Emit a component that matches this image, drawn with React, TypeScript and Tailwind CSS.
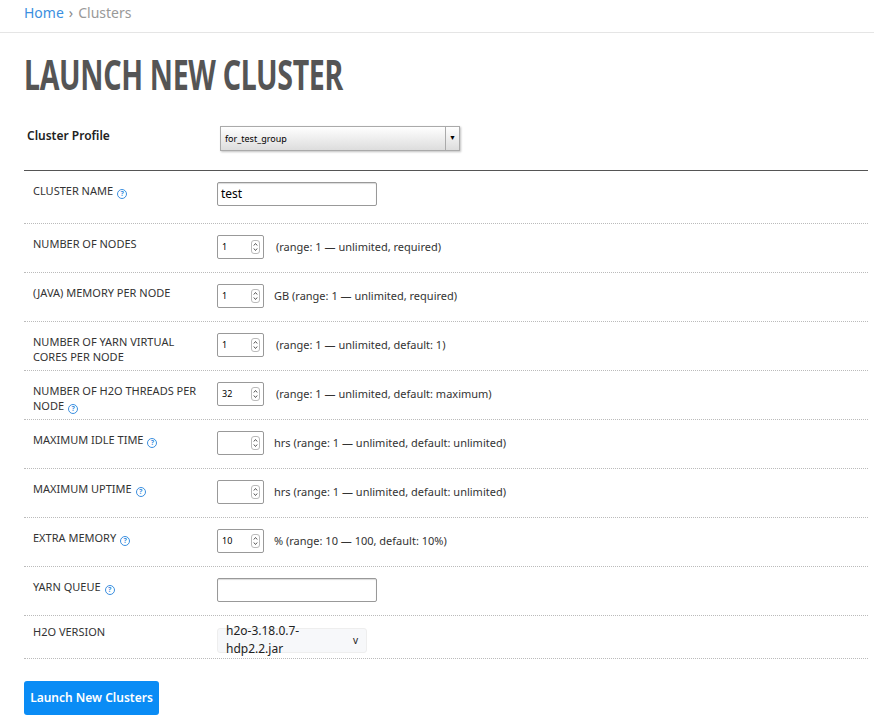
import React from 'react';

const Help = () => (
  <span className="ml-1 inline-flex h-[10px] w-[10px] items-center justify-center rounded-full border border-[#3b8fe0] align-[-1px] text-[7px] font-bold leading-none text-[#3b8fe0]">
    ?
  </span>
);

const NumInput = ({ value }: { value?: string }) => (
  <div className="flex h-[24px] w-[47px] items-center justify-between rounded-[2px] border border-[#999] bg-white pl-[4px] pr-[3px] text-[9px] text-black">
    <span>{value ?? ''}</span>
    <span className="flex h-[14px] w-[9px] items-center justify-center rounded-[3px] border border-[#bbb]">
      <svg width="5" height="10" viewBox="0 0 5 10" fill="none" stroke="#555" strokeWidth="1">
        <path d="M0.8 3.5 L2.5 1.5 L4.2 3.5" />
        <path d="M0.8 6.5 L2.5 8.5 L4.2 6.5" />
      </svg>
    </span>
  </div>
);

type Row = { label: React.ReactNode; field: React.ReactNode };

const rows: Row[] = [
  {
    label: <>CLUSTER NAME<Help /></>,
    field: (
      <div className="flex h-[24px] w-[160px] items-center rounded-[2px] border border-[#999] bg-white px-[3px] text-[12px] text-black shadow-[inset_0_1px_1px_rgba(0,0,0,0.15)]">
        test
      </div>
    ),
  },
  { label: 'NUMBER OF NODES', field: <><NumInput value="1" /><span className="ml-[12px]">(range: 1 — unlimited, required)</span></> },
  { label: '(JAVA) MEMORY PER NODE', field: <><NumInput value="1" /><span className="ml-[10px]">GB (range: 1 — unlimited, required)</span></> },
  { label: <>NUMBER OF YARN VIRTUAL<br />CORES PER NODE</>, field: <><NumInput value="1" /><span className="ml-[12px]">(range: 1 — unlimited, default: 1)</span></> },
  { label: <>NUMBER OF H2O THREADS PER<br />NODE<Help /></>, field: <><NumInput value="32" /><span className="ml-[12px]">(range: 1 — unlimited, default: maximum)</span></> },
  { label: <>MAXIMUM IDLE TIME<Help /></>, field: <><NumInput /><span className="ml-[10px]">hrs (range: 1 — unlimited, default: unlimited)</span></> },
  { label: <>MAXIMUM UPTIME<Help /></>, field: <><NumInput /><span className="ml-[10px]">hrs (range: 1 — unlimited, default: unlimited)</span></> },
  { label: <>EXTRA MEMORY<Help /></>, field: <><NumInput value="10" /><span className="ml-[10px]">% (range: 10 — 100, default: 10%)</span></> },
  {
    label: <>YARN QUEUE<Help /></>,
    field: <div className="h-[24px] w-[160px] rounded-[2px] border border-[#999] bg-white shadow-[inset_0_1px_1px_rgba(0,0,0,0.15)]" />,
  },
  {
    label: 'H2O VERSION',
    field: (
      <div className="mt-[10px] flex h-[25px] w-[150px] items-center gap-[6px] rounded-[3px] border border-[#eee] bg-[#f7f8fa] px-[8px] text-[12px] text-[#222]">
        h2o-3.18.0.7-hdp2.2.jar <span className="text-[10px]">v</span>
      </div>
    ),
  },
];

export default function App() {
  return (
    <div className="min-h-[725px] bg-white font-['Open_Sans',sans-serif] text-[#333]">
      <div className="border-b border-[#e5e5e5] px-[24px] pb-[9px] pt-[2px] text-[14px]">
        <span className="text-[#3b8fe0]">Home</span>
        <span className="mx-[5px] text-[#888]">›</span>
        <span className="text-[#999]">Clusters</span>
      </div>
      <div className="pl-[24px] pr-[6px]">
        <h1 className="mt-[17px] h-[48px] w-[600px] origin-left scale-x-[0.68] font-['DejaVu_Sans_Condensed','DejaVu_Sans',sans-serif] text-[42px] font-bold leading-[48px] tracking-[-0.5px] text-[#555]">
          LAUNCH NEW CLUSTER
        </h1>
        <div className="mt-[28px] flex items-start pb-[19px]">
          <div className="w-[196px] pl-[3px] pt-[1px] text-[12px] font-semibold text-[#222]">Cluster Profile</div>
          <div className="flex h-[25px] w-[240px] items-center justify-between border border-[#aaa] bg-gradient-to-b from-white to-[#ddd] pl-[4px] text-[9px] text-black shadow-[1px_1px_2px_rgba(0,0,0,0.25)]">
            for_test_group
            <span className="flex h-full w-[14px] items-center justify-center border-l border-[#aaa] text-[7px]">▼</span>
          </div>
        </div>
        <div className="border-t border-[#555]">
          {rows.map((r, i) => (
            <div
              key={i}
              className={`flex border-b border-dotted border-[#bbb] ${i === 0 ? 'h-[53px] pt-[12px]' : i === 9 ? 'h-[43px] pt-[8px]' : 'h-[49px] pt-[12px]'}`}
            >
              <div className="w-[193px] pl-[9px] text-[11px] leading-[15px] text-[#333]">{r.label}</div>
              <div className="-mt-[1px] flex h-[24px] items-center text-[11px] text-[#333]">{r.field}</div>
            </div>
          ))}
        </div>
        <button className="mt-[22px] h-[34px] w-[135px] rounded-[3px] bg-[#0a8cf5] text-[12px] font-semibold text-white">
          Launch New Clusters
        </button>
      </div>
    </div>
  );
}
